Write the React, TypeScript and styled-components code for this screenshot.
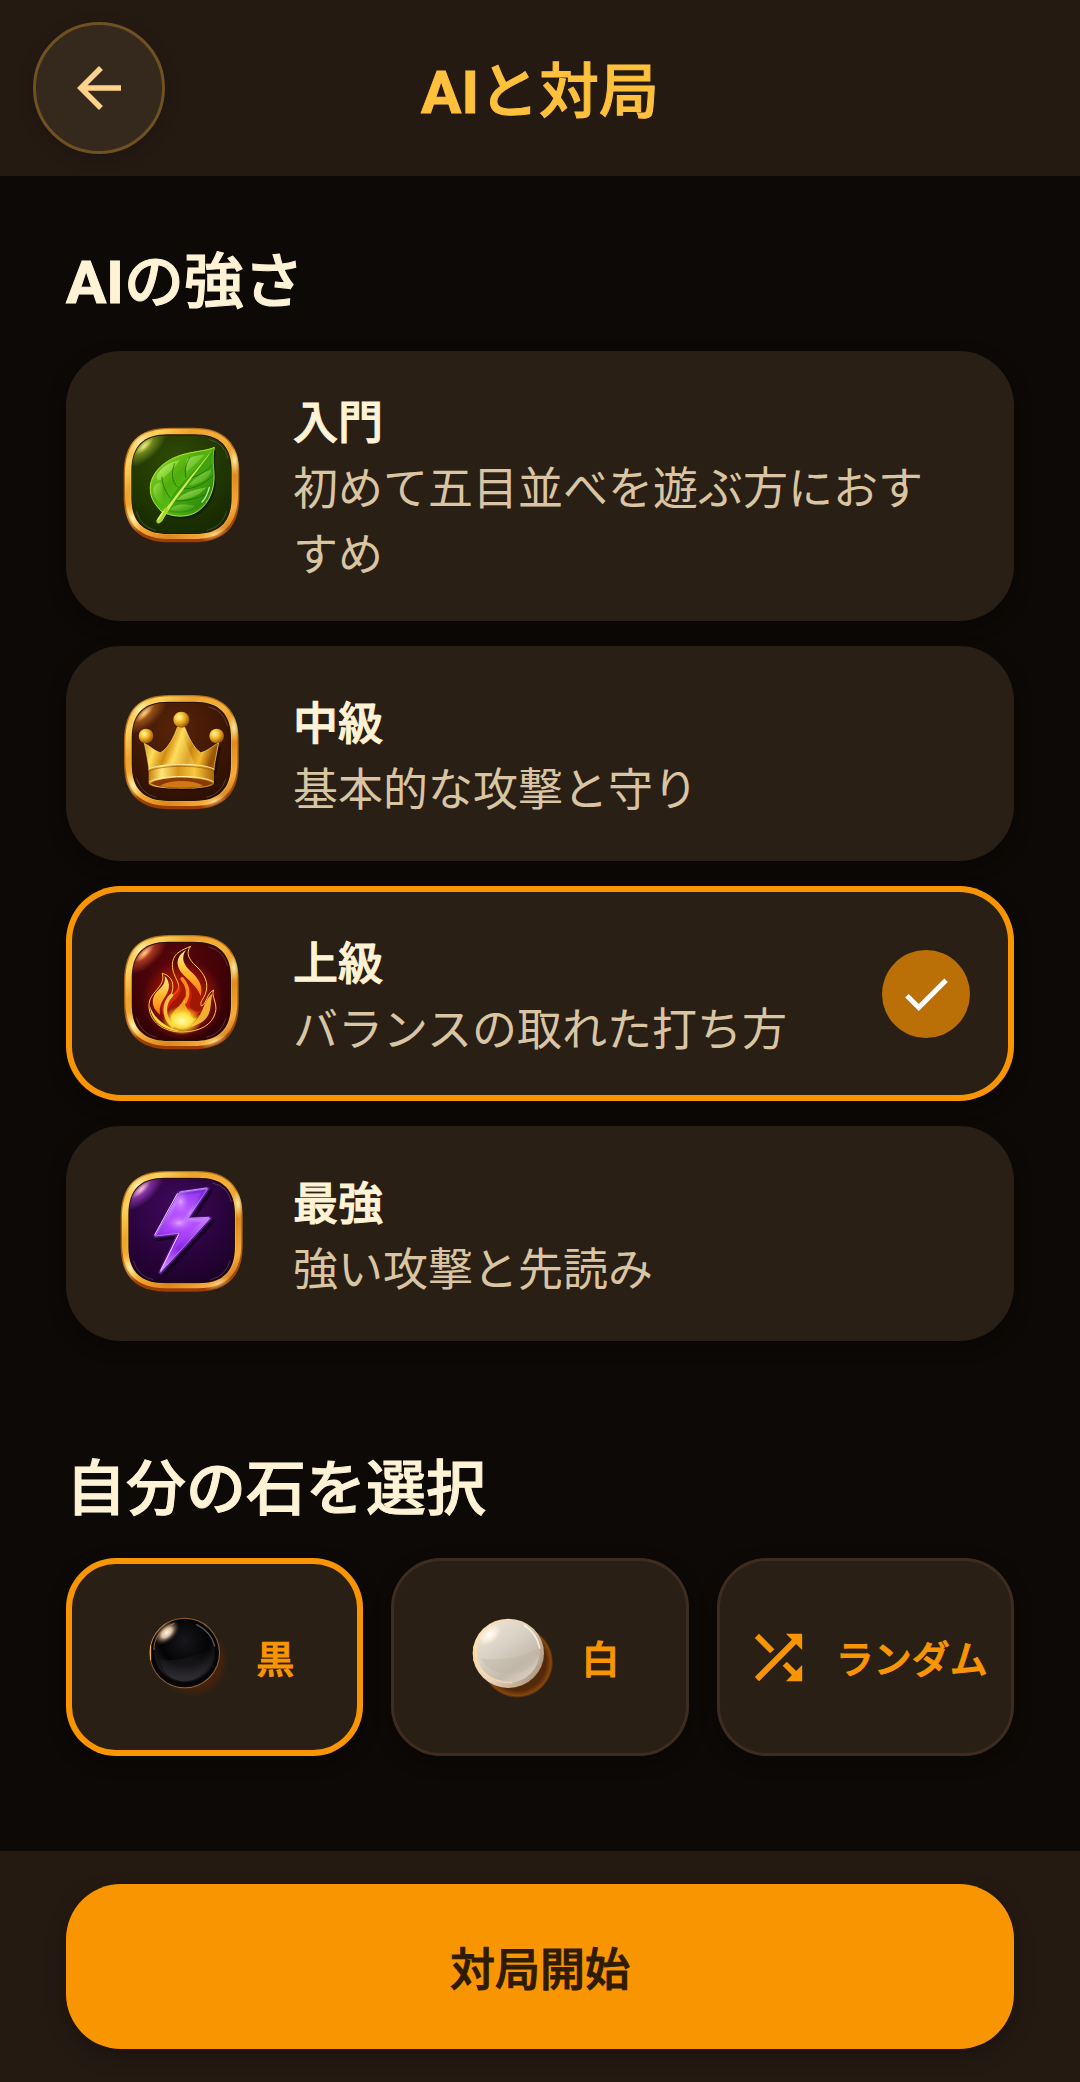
import React, { useState } from "react";
import styled, { createGlobalStyle, css } from "styled-components";

const color = {
  page: "#0d0906",
  bar: "#241a12",
  card: "#291f15",
  line: "#3d2c1f",
  accent: "#f99500",
  gold: "#ffc03c",
  cream: "#fff3d6",
  sand: "#d9c5a3",
};

/* Semi-bold Japanese: the medium cut thickened by a hairline. */
const semiBold = css`
  font-weight: 500;
  -webkit-text-stroke: 1px currentColor;
`;

const GlobalStyle = createGlobalStyle`
  * { box-sizing: border-box; }
  body {
    margin: 0;
    background: ${color.page};
    color: ${color.cream};
    font-family: Roboto, "Noto Sans CJK JP", sans-serif;
  }
  button, input { font: inherit; }
`;

const Page = styled.div`
  display: flex;
  flex-direction: column;
  min-height: 100vh;
`;

const TopBar = styled.header`
  display: grid;
  grid-template-columns: 132px 1fr 132px;
  align-items: center;
  padding: 22px 33px;
  background: ${color.bar};
`;

const BackButton = styled.button`
  display: grid;
  place-items: center;
  width: 132px;
  height: 132px;
  padding: 0;
  border: 3px solid #6f5122;
  border-radius: 50%;
  background: #35281d;
  color: #ffd28c;
  box-shadow: 0 4px 16px rgba(0, 0, 0, 0.2);
  cursor: pointer;
`;

const Title = styled.h1`
  margin: 0;
  padding-top: 10px;
  text-align: center;
  font-size: 60px;
  line-height: 80px;
  ${semiBold}
  color: ${color.gold};
`;

const Latin = styled.span`
  font-weight: 700;
`;

const Content = styled.main`
  flex: 1;
  display: flex;
  flex-direction: column;
  gap: 109px;
  padding: 67px 66px 64px;
`;

const Group = styled.section`
  display: flex;
  flex-direction: column;
  gap: 28px;
`;

const GroupTitle = styled.h2`
  margin: 0;
  font-size: 60px;
  line-height: 80px;
  ${semiBold}
`;

const LevelList = styled.div`
  display: flex;
  flex-direction: column;
  gap: 25px;
`;

const StoneList = styled.div`
  display: grid;
  grid-template-columns: repeat(3, 1fr);
  gap: 28px;
`;

const HiddenRadio = styled.input`
  position: absolute;
  opacity: 0;
  width: 1px;
  height: 1px;
  margin: 0;
`;

const LevelCard = styled.label<{ $on: boolean }>`
  position: relative;
  display: flex;
  align-items: center;
  gap: 41px;
  min-height: 215px;
  padding: 32px 44px;
  border-radius: 55px;
  background: ${color.card};
  box-shadow: ${(p) => (p.$on ? `inset 0 0 0 6px ${color.accent}, ` : "")}0 6px 16px rgba(6, 6, 4, 0.5);
  cursor: pointer;
`;

const LevelText = styled.span`
  flex: 1;
  display: flex;
  flex-direction: column;
  padding: 8px 16px 0 0;
  font-size: 45px;
  line-height: 66px;
`;

const LevelName = styled.span`
  ${semiBold}
`;

const LevelNote = styled.span`
  color: ${color.sand};
`;

const Badge = styled.span`
  display: grid;
  place-items: center;
  width: 88px;
  height: 88px;
  border-radius: 50%;
  background: #ba7006;
  color: #fff;
`;

const StoneCard = styled.label<{ $on: boolean }>`
  position: relative;
  display: flex;
  align-items: center;
  justify-content: center;
  gap: 22px;
  height: 198px;
  border-radius: 50px;
  background: ${color.card};
  box-shadow: inset 0 0 0 ${(p) => (p.$on ? `6px ${color.accent}` : `3px ${color.line}`)},
    0 6px 16px rgba(6, 6, 4, 0.5);
  color: ${color.accent};
  font-size: 38px;
  line-height: 56px;
  white-space: nowrap;
  cursor: pointer;
`;

const StoneName = styled.span`
  padding-top: 6px;
  ${semiBold}
`;

const BottomBar = styled.footer`
  padding: 33px 66px;
  background: ${color.bar};
`;

const StartButton = styled.button`
  display: block;
  width: 100%;
  height: 165px;
  padding: 0;
  border: 0;
  border-radius: 55px;
  background: ${color.accent};
  color: #2f1b00;
  font-size: 45px;
  ${semiBold}
  box-shadow: 0 8px 20px rgba(0, 0, 0, 0.25);
  cursor: pointer;
`;

const Art = styled.svg<{ $size: number }>`
  display: block;
  flex: none;
  width: ${(p) => p.$size}px;
  height: ${(p) => p.$size}px;
`;

function Glyph({ d, size }: { d: string; size: number }) {
  return (
    <Art $size={size} viewBox="0 0 24 24" fill="currentColor" aria-hidden="true">
      <path d={d} />
    </Art>
  );
}

const ARROW = "M20 11H7.83l5.59-5.59L12 4l-8 8 8 8 1.41-1.41L7.83 13H20v-2z";
const CHECK = "M9 16.17L4.83 12l-1.42 1.41L9 19 21 7l-1.41-1.41z";
const SHUFFLE =
  "M10.59 9.17L5.41 4 4 5.41l5.17 5.17 1.42-1.41zM14.5 4l2.04 2.04L4 18.59 5.41 20 17.96 7.46 20 9.5V4h-5.5zm.33 9.41l-1.41 1.41 3.13 3.13L14.5 20H20v-5.5l-2.04 2.04-3.13-3.13z";

type FrameProps = {
  id: string;
  x: number;
  y: number;
  w: number;
  h: number;
  dark: string;
  mid: string;
  glow: string;
};

/* Rounded square whose corners ease into its sides. */
function squircle(x: number, y: number, w: number, h: number, r: number) {
  const k = r * 0.33;
  return (
    `M${x + r} ${y}H${x + w - r}C${x + w - k} ${y} ${x + w} ${y + k} ${x + w} ${y + r}` +
    `V${y + h - r}C${x + w} ${y + h - k} ${x + w - k} ${y + h} ${x + w - r} ${y + h}` +
    `H${x + r}C${x + k} ${y + h} ${x} ${y + h - k} ${x} ${y + h - r}` +
    `V${y + r}C${x} ${y + k} ${x + k} ${y} ${x + r} ${y}Z`
  );
}

/* Gold rim with a tinted glass plate inside, shared by the level icons. */
function Frame({ id, x, y, w, h, dark, mid, glow }: FrameProps) {
  const plate = squircle(x + 25, y + 23, w - 50, h - 50, 108);
  const outer = squircle(x, y, w, h, 138);
  return (
    <>
      <defs>
        <linearGradient id={`${id}-rim`} x1="0" y1="0" x2="1" y2="1">
          <stop offset="0" stopColor="#d98a1c" />
          <stop offset="0.16" stopColor="#ffd35c" />
          <stop offset="0.3" stopColor="#eda42c" />
          <stop offset="0.5" stopColor="#f5b03a" />
          <stop offset="0.68" stopColor="#dc881a" />
          <stop offset="0.84" stopColor="#f7a93a" />
          <stop offset="1" stopColor="#a84a04" />
        </linearGradient>
        <linearGradient id={`${id}-edge`} x1="0" y1="0" x2="0" y2="1">
          <stop offset="0" stopColor="#b87418" />
          <stop offset="0.6" stopColor="#a5600f" />
          <stop offset="1" stopColor="#9c3a00" />
        </linearGradient>
        <radialGradient id={`${id}-plate`} cx="0.45" cy="0.3" r="0.75">
          <stop offset="0" stopColor={mid} />
          <stop offset="1" stopColor={dark} />
        </radialGradient>
        <radialGradient id={`${id}-glow`} cx="0.5" cy="0.5" r="0.5">
          <stop offset="0" stopColor={glow} />
          <stop offset="0.35" stopColor={glow} stopOpacity="0.5" />
          <stop offset="1" stopColor={glow} stopOpacity="0" />
        </radialGradient>
        <radialGradient id={`${id}-spark`} cx="0.5" cy="0.5" r="0.5">
          <stop offset="0" stopColor="#fff6b8" />
          <stop offset="1" stopColor="#ffe27a" stopOpacity="0" />
        </radialGradient>
        <clipPath id={`${id}-clip`}>
          <path d={plate} />
        </clipPath>
        <clipPath id={`${id}-outer`}>
          <path d={outer} />
        </clipPath>
      </defs>
      <path d={outer} fill={`url(#${id}-edge)`} />
      <path d={squircle(x + 4, y + 4, w - 8, h - 14, 134)} fill={`url(#${id}-rim)`} />
      <g clipPath={`url(#${id}-outer)`}>
        <ellipse cx={x + 50} cy={y + 44} rx="48" ry="26" fill={`url(#${id}-spark)`} transform={`rotate(-45 ${x + 50} ${y + 44})`} />
        <ellipse cx={x + w - 14} cy={y + 98} rx="20" ry="46" fill={`url(#${id}-spark)`} opacity="0.9" />
        <ellipse cx={x + 28} cy={y + h - 72} rx="20" ry="44" fill={`url(#${id}-spark)`} transform={`rotate(-25 ${x + 28} ${y + h - 72})`} />
        <ellipse cx={x + w - 74} cy={y + h - 24} rx="44" ry="14" fill={`url(#${id}-spark)`} opacity="0.7" transform={`rotate(-22 ${x + w - 74} ${y + h - 24})`} />
      </g>
      <path d={squircle(x + 21, y + 19, w - 42, h - 43, 111)} fill="#ffd874" opacity="0.5" />
      <path d={squircle(x + 23, y + 20, w - 46, h - 45, 110)} fill="#2a1000" />
      <g clipPath={`url(#${id}-clip)`}>
        <rect x={x} y={y} width={w} height={h} fill={`url(#${id}-plate)`} />
        <ellipse cx={x + 62} cy={y + 56} rx="84" ry="40" fill={`url(#${id}-glow)`} transform={`rotate(-42 ${x + 62} ${y + 56})`} />
        <ellipse cx={x + 62} cy={y + 54} rx="40" ry="12" fill={`url(#${id}-spark)`} opacity="0.7" transform={`rotate(-44 ${x + 62} ${y + 54})`} />
      </g>
      <path
        d={`M${x + 38} ${y + h - 92}q14 46 58 56M${x + w - 38} ${y + h - 92}q-14 46 -58 56M${x + w - 90} ${y + 36}q46 10 56 56`}
        fill="none"
        stroke="#fff"
        strokeWidth="2.5"
        strokeLinecap="round"
        opacity="0.22"
      />
    </>
  );
}

function LeafIcon() {
  const body =
    "M313 112C290 124 238 124 200 140C150 160 117 200 121 242C123 270 140 288 153 303C180 320 222 324 252 310C290 292 310 250 312 208C313 170 305 150 313 112Z";
  return (
    <Art $size={142} viewBox="0 15 426 426" aria-hidden="true">
      <Frame id="leaf" x={41} y={53} w={347} h={344} dark="#122400" mid="#304c04" glow="#b9cf3a" />
      <defs>
        <linearGradient id="leaf-fill" x1="0" y1="0" x2="1" y2="1">
          <stop offset="0" stopColor="#a4ea2c" />
          <stop offset="0.42" stopColor="#4fae0c" />
          <stop offset="0.6" stopColor="#57bd18" />
          <stop offset="1" stopColor="#238004" />
        </linearGradient>
        <linearGradient id="leaf-shine" x1="0" y1="0" x2="1" y2="1">
          <stop offset="0" stopColor="#e8ffb0" stopOpacity="0.85" />
          <stop offset="1" stopColor="#8ee82a" stopOpacity="0.1" />
        </linearGradient>
      </defs>
      <path d={body} fill="#0a1500" opacity="0.6" transform="translate(6 8)" />
      <path d={body} fill="url(#leaf-fill)" stroke="#b8e63a" strokeWidth="3" />
      <path d="M176 288C184 240 240 200 313 112C309 166 318 212 300 250C270 312 214 316 160 303Z" fill="#1c7602" opacity="0.35" />
      <g fill="url(#leaf-shine)">
        <path d="M140 200C150 172 180 156 210 150C196 170 182 184 162 202C152 212 142 216 140 200Z" />
        <path d="M232 146C250 138 270 134 284 134C268 150 250 168 230 186C226 172 226 158 232 146Z" opacity="0.7" />
        <path d="M130 236C136 218 150 214 154 222C158 250 160 268 160 286C142 276 128 258 130 236Z" opacity="0.5" />
        <path d="M200 270C220 248 250 240 290 232C270 256 240 270 200 270Z" opacity="0.9" />
        <path d="M236 226C256 200 280 186 304 180C300 206 272 222 236 226Z" opacity="0.7" />
        <path d="M180 300C196 280 222 282 256 288C232 306 208 306 180 300Z" opacity="0.5" />
      </g>
      <g fill="none" stroke="#1d6a00" strokeWidth="3" opacity="0.75">
        <path d="M228 204C222 184 228 158 240 142" />
        <path d="M204 232C184 216 184 186 194 160" />
        <path d="M180 264C166 244 156 220 156 200" />
        <path d="M240 204C262 200 290 184 306 164" />
        <path d="M214 236C246 240 284 222 308 198" />
        <path d="M186 272C220 276 260 268 296 248" />
      </g>
      <path d="M143 334C160 304 214 232 312 114C240 214 190 272 156 334Q146 342 143 334Z" fill="#d0ec52" />
      <path d="M146 333L168 301" stroke="#a8d82c" strokeWidth="14" strokeLinecap="round" />
      <path d="M144 328L160 304" stroke="#e2f880" strokeWidth="4" strokeLinecap="round" />
      <path d="M298 232Q290 262 276 276" fill="none" stroke="#e8ffd8" strokeWidth="4" strokeLinecap="round" opacity="0.8" />
    </Art>
  );
}

function CrownIcon() {
  const body =
    "M103 190C122 200 138 216 152 218C176 204 192 170 202 142H224C236 170 250 204 272 218C290 214 306 200 326 188C320 220 314 246 311 274H118C114 246 110 220 103 190Z";
  return (
    <Art $size={142} viewBox="0 9 426 426" aria-hidden="true">
      <Frame id="crown" x={42} y={45} w={344} h={343} dark="#260c02" mid="#5a2408" glow="#e0822c" />
      <defs>
        <linearGradient id="crown-fill" x1="0" y1="0" x2="1" y2="0.2">
          <stop offset="0" stopColor="#b87008" />
          <stop offset="0.22" stopColor="#ffdf5a" />
          <stop offset="0.38" stopColor="#d18b10" />
          <stop offset="0.52" stopColor="#ffdc56" />
          <stop offset="0.7" stopColor="#c98510" />
          <stop offset="0.86" stopColor="#f4bb30" />
          <stop offset="1" stopColor="#9a5604" />
        </linearGradient>
        <linearGradient id="crown-band" x1="0" y1="0" x2="1" y2="0">
          <stop offset="0" stopColor="#c88410" />
          <stop offset="0.2" stopColor="#ffe676" />
          <stop offset="0.45" stopColor="#d8951a" />
          <stop offset="0.7" stopColor="#fbc840" />
          <stop offset="1" stopColor="#a86408" />
        </linearGradient>
        <radialGradient id="crown-ball" cx="0.36" cy="0.34" r="0.7">
          <stop offset="0" stopColor="#fff6b4" />
          <stop offset="0.3" stopColor="#ffd24a" />
          <stop offset="0.7" stopColor="#d18c10" />
          <stop offset="1" stopColor="#8c4c04" />
        </radialGradient>
      </defs>
      <path d={body} fill="#140500" opacity="0.6" transform="translate(8 10)" />
      <ellipse cx="218" cy="306" rx="98" ry="26" fill="#140500" opacity="0.6" />
      <path d={body} fill="url(#crown-fill)" stroke="#ffe07a" strokeWidth="2" />
      <path d="M214 146C204 190 190 220 168 256H256C240 220 226 190 214 146Z" fill="#ffdd64" opacity="0.35" />
      <path d="M116 268C150 246 280 246 312 268V312C300 322 270 326 214 326C160 326 130 322 116 312Z" fill="url(#crown-band)" />
      <path d="M122 310C150 288 278 288 308 310C290 322 250 325 214 325C176 325 140 322 122 310Z" fill="#8c3a04" />
      <path d="M150 318C176 298 252 298 280 318C256 325 174 325 150 318Z" fill="#e0861a" opacity="0.8" />
      <g fill="none" stroke="#fff0a0" strokeWidth="3">
        <path d="M115 268C150 248 280 248 313 268" />
        <path d="M118 306C150 284 280 284 311 306" />
      </g>
      <path d="M116 274C150 254 280 254 312 274" fill="none" stroke="#9a5a06" strokeWidth="2" />
      <circle cx="108" cy="168" r="22" fill="url(#crown-ball)" />
      <circle cx="214" cy="119" r="24" fill="url(#crown-ball)" />
      <circle cx="320" cy="168" r="22" fill="url(#crown-ball)" />
    </Art>
  );
}

function FlameIcon() {
  return (
    <Art $size={142} viewBox="0 9 426 426" aria-hidden="true">
      <Frame id="flame" x={42} y={45} w={344} h={343} dark="#2a0004" mid="#5c060a" glow="#ff6a3c" />
      <defs>
        <linearGradient id="flame-outer" x1="0" y1="0" x2="0.2" y2="1">
          <stop offset="0" stopColor="#ffa62c" />
          <stop offset="0.35" stopColor="#ff5a14" />
          <stop offset="0.7" stopColor="#ff7412" />
          <stop offset="1" stopColor="#ffb424" />
        </linearGradient>
        <linearGradient id="flame-lick" x1="0" y1="0" x2="0" y2="1">
          <stop offset="0" stopColor="#fff08a" />
          <stop offset="0.5" stopColor="#ffb82c" />
          <stop offset="1" stopColor="#ff7a14" />
        </linearGradient>
        <radialGradient id="flame-core" cx="0.5" cy="0.5" r="0.5">
          <stop offset="0" stopColor="#fffbb0" />
          <stop offset="0.5" stopColor="#ffe540" stopOpacity="0.95" />
          <stop offset="1" stopColor="#ffb01c" stopOpacity="0" />
        </radialGradient>
        <radialGradient id="flame-halo">
          <stop offset="0.5" stopColor="#ff2a00" stopOpacity="0.5" />
          <stop offset="1" stopColor="#ff2a00" stopOpacity="0" />
        </radialGradient>
        <clipPath id="flame-clip">
          <path d="M242 79C226 98 236 118 258 138C284 162 298 190 286 222C280 238 268 246 274 258C292 250 288 222 311 210C302 228 324 250 316 278C306 314 272 335 216 336C160 336 118 306 117 258C116 214 168 204 157 160C188 168 196 196 182 228C200 222 210 208 204 188C194 166 184 150 188 124C194 98 216 90 242 79Z" />
        </clipPath>
      </defs>
      <ellipse cx="218" cy="240" rx="122" ry="122" fill="url(#flame-halo)" />
      <path d="M242 79C226 98 236 118 258 138C284 162 298 190 286 222C280 238 268 246 274 258C292 250 288 222 311 210C302 228 324 250 316 278C306 314 272 335 216 336C160 336 118 306 117 258C116 214 168 204 157 160C188 168 196 196 182 228C200 222 210 208 204 188C194 166 184 150 188 124C194 98 216 90 242 79Z" fill="url(#flame-outer)" stroke="#ffc83c" strokeWidth="3" />
      <g clipPath="url(#flame-clip)">
        <path d="M164 168C180 184 180 204 170 222C158 242 146 258 150 284C124 264 122 236 140 216C156 200 168 190 164 168Z" fill="url(#flame-lick)" />
        <path d="M228 90C212 112 220 134 242 154C266 176 280 198 272 228C262 200 240 184 220 164C200 144 192 112 228 90Z" fill="url(#flame-lick)" />
        <path d="M206 190C222 212 204 232 188 246C172 262 166 280 176 300C152 284 152 262 164 244C178 224 206 214 206 190Z" fill="#ee3208" opacity="0.6" />
        <path d="M226 182C246 206 250 226 240 248C236 268 254 282 276 270C262 292 236 286 228 264C224 240 238 214 226 182Z" fill="#e82a06" opacity="0.6" />
        <path d="M308 220C300 244 306 268 292 290C280 308 258 316 242 320C262 300 274 280 282 258C290 240 296 230 308 220Z" fill="#ffc034" opacity="0.9" />
        <path d="M120 258C134 300 170 322 214 334C164 334 122 306 120 258Z" fill="#ffd83c" />
        <path d="M184 226C162 248 156 288 188 318" fill="none" stroke="#ffd84c" strokeWidth="11" strokeLinecap="round" opacity="0.85" />
        <path d="M216 176C236 200 238 222 226 246" fill="none" stroke="#ff9c24" strokeWidth="10" strokeLinecap="round" opacity="0.9" />
        <path d="M224 230C218 258 186 266 182 294C188 318 240 326 262 294C250 298 238 292 242 278C230 268 222 254 224 230Z" fill="#ffd030" opacity="0.75" />
        <ellipse cx="216" cy="302" rx="60" ry="44" fill="url(#flame-core)" />
      </g>
    </Art>
  );
}

function BoltIcon() {
  const bolt = "M208 113L293 101L233 192L300 190L151 352L207 235L136 243Z";
  return (
    <Art $size={142} viewBox="0 24 426 426" aria-hidden="true">
      <Frame id="bolt" x={32} y={48} w={366} h={362} dark="#170022" mid="#40085c" glow="#d060ff" />
      <defs>
        <linearGradient id="bolt-fill" x1="0.6" y1="0" x2="0.3" y2="1">
          <stop offset="0" stopColor="#7a2ae0" />
          <stop offset="0.25" stopColor="#c47cff" />
          <stop offset="0.45" stopColor="#b050fa" />
          <stop offset="0.7" stopColor="#8a28e4" />
          <stop offset="1" stopColor="#d488ff" />
        </linearGradient>
        <radialGradient id="bolt-hot">
          <stop offset="0" stopColor="#f0c8ff" stopOpacity="0.7" />
          <stop offset="1" stopColor="#c060ff" stopOpacity="0" />
        </radialGradient>
        <clipPath id="bolt-clip">
          <path d={bolt} />
        </clipPath>
      </defs>
      <path d={bolt} fill="#0a0010" stroke="#0a0010" strokeWidth="14" strokeLinejoin="round" opacity="0.6" transform="translate(8 8)" />
      <path d={bolt} fill="#6a1cb4" stroke="#5a1496" strokeWidth="12" strokeLinejoin="round" />
      <path d={bolt} fill="url(#bolt-fill)" stroke="#d8a0ff" strokeWidth="2" strokeLinejoin="round" />
      <g clipPath="url(#bolt-clip)">
        <path d="M210 124L276 112L214 202L272 202L184 292L222 222L158 232Z" fill="#b040ff" opacity="0.55" />
        <ellipse cx="208" cy="204" rx="44" ry="26" fill="url(#bolt-hot)" />
        <ellipse cx="212" cy="140" rx="26" ry="34" fill="url(#bolt-hot)" />
      </g>
      <path d="M202 116L134 240M205 240L152 346" stroke="#f0d0ff" strokeWidth="3" strokeLinecap="round" />
      <path d="M212 110L290 99M296 187L238 190" stroke="#c890f4" strokeWidth="3" strokeLinecap="round" />
    </Art>
  );
}

function BlackStone() {
  return (
    <Art $size={99} viewBox="255 204 297 297" aria-hidden="true">
      <defs>
        <radialGradient id="bs-shadow">
          <stop offset="0.7" stopColor="#4a220a" />
          <stop offset="1" stopColor="#4a220a" stopOpacity="0" />
        </radialGradient>
        <linearGradient id="bs-rim" x1="0" y1="0.2" x2="1" y2="0.7">
          <stop offset="0" stopColor="#f0a860" />
          <stop offset="0.2" stopColor="#8a5a34" />
          <stop offset="1" stopColor="#8a6850" />
        </linearGradient>
        <radialGradient id="bs-face" cx="0.5" cy="0.32" r="0.72">
          <stop offset="0" stopColor="#17161a" />
          <stop offset="0.55" stopColor="#040406" />
          <stop offset="0.85" stopColor="#1c1a1e" />
          <stop offset="1" stopColor="#040303" />
        </radialGradient>
        <radialGradient id="bs-shine">
          <stop offset="0" stopColor="#fffaf0" />
          <stop offset="0.4" stopColor="#f0d0ac" stopOpacity="0.9" />
          <stop offset="1" stopColor="#40302a" stopOpacity="0" />
        </radialGradient>
        <linearGradient id="bs-low" x1="0" y1="0" x2="0" y2="1">
          <stop offset="0" stopColor="#2c2a30" stopOpacity="0" />
          <stop offset="1" stopColor="#3a383e" stopOpacity="0.7" />
        </linearGradient>
      </defs>
      <circle cx="428" cy="364" r="108" fill="url(#bs-shadow)" />
      <circle cx="404" cy="339" r="106" fill="url(#bs-rim)" />
      <circle cx="404" cy="339" r="103" fill="#080506" />
      <circle cx="404" cy="337" r="91" fill="url(#bs-face)" />
      <path d="M330 358C370 366 440 354 490 322C494 380 450 424 404 424C362 424 336 396 330 358Z" fill="url(#bs-low)" />
      <ellipse cx="350" cy="278" rx="46" ry="27" fill="url(#bs-shine)" transform="rotate(-42 350 278)" />
      <path d="M312 330C310 294 336 262 374 250" fill="none" stroke="#c88a54" strokeWidth="3" opacity="0.7" />
      <path d="M302 318V360" stroke="#ffb868" strokeWidth="3" strokeLinecap="round" />
      <path d="M440 254Q484 276 494 318" fill="none" stroke="#908c94" strokeWidth="4" strokeLinecap="round" opacity="0.6" />
    </Art>
  );
}

function WhiteStone() {
  return (
    <Art $size={99} viewBox="243 204 297 297" aria-hidden="true">
      <defs>
        <radialGradient id="ws-shadow">
          <stop offset="0.8" stopColor="#54290a" />
          <stop offset="0.94" stopColor="#88480c" />
          <stop offset="1" stopColor="#7a400c" stopOpacity="0" />
        </radialGradient>
        <linearGradient id="ws-rim" x1="0" y1="0.2" x2="1" y2="0.8">
          <stop offset="0" stopColor="#ffe2b4" />
          <stop offset="0.5" stopColor="#e6d2bc" />
          <stop offset="1" stopColor="#a8927c" />
        </linearGradient>
        <linearGradient id="ws-face" x1="0.1" y1="0" x2="0.8" y2="1">
          <stop offset="0" stopColor="#f0e4d6" />
          <stop offset="0.4" stopColor="#d9d2c6" />
          <stop offset="0.75" stopColor="#c4baac" />
          <stop offset="1" stopColor="#ded2c4" />
        </linearGradient>
        <radialGradient id="ws-shine">
          <stop offset="0" stopColor="#fffefa" />
          <stop offset="0.5" stopColor="#fff4e2" stopOpacity="0.8" />
          <stop offset="1" stopColor="#fff0dc" stopOpacity="0" />
        </radialGradient>
      </defs>
      <circle cx="415" cy="366" r="108" fill="url(#ws-shadow)" />
      <ellipse cx="388" cy="340" rx="107" ry="104" fill="url(#ws-rim)" />
      <ellipse cx="388" cy="336" rx="94" ry="92" fill="url(#ws-face)" />
      <path d="M306 354C350 366 440 350 480 320C482 370 446 400 390 400C344 400 316 382 306 354Z" fill="#b8ae9f" opacity="0.3" />
      <ellipse cx="332" cy="284" rx="42" ry="25" fill="url(#ws-shine)" transform="rotate(-42 332 284)" />
      <path d="M436 256Q474 280 482 324" fill="none" stroke="#fffaf2" strokeWidth="5" strokeLinecap="round" opacity="0.8" />
      <path d="M300 384Q340 428 398 428" fill="none" stroke="#ffdcb0" strokeWidth="5" strokeLinecap="round" opacity="0.7" />
      <path d="M285 320V362" stroke="#ffd08c" strokeWidth="4" strokeLinecap="round" />
    </Art>
  );
}

const levels = [
  { id: "beginner", name: "入門", note: "初めて五目並べを遊ぶ方におすすめ", icon: <LeafIcon /> },
  { id: "middle", name: "中級", note: "基本的な攻撃と守り", icon: <CrownIcon /> },
  { id: "advanced", name: "上級", note: "バランスの取れた打ち方", icon: <FlameIcon /> },
  { id: "strongest", name: "最強", note: "強い攻撃と先読み", icon: <BoltIcon /> },
];

const stones = [
  { id: "black", name: "黒", icon: <BlackStone /> },
  { id: "white", name: "白", icon: <WhiteStone /> },
  { id: "random", name: "ランダム", icon: <Glyph d={SHUFFLE} size={71} /> },
];

export default function App() {
  const [level, setLevel] = useState("advanced");
  const [stone, setStone] = useState("black");

  return (
    <Page lang="ja">
      <GlobalStyle />
      <TopBar>
        <BackButton type="button" aria-label="戻る">
          <Glyph d={ARROW} size={66} />
        </BackButton>
        <Title>
          <Latin>AI</Latin>と対局
        </Title>
      </TopBar>
      <Content>
        <Group>
          <GroupTitle id="level-title">
            <Latin>AI</Latin>の強さ
          </GroupTitle>
          <LevelList role="radiogroup" aria-labelledby="level-title">
            {levels.map((item) => (
              <LevelCard key={item.id} htmlFor={item.id} $on={level === item.id}>
                <HiddenRadio
                  type="radio"
                  id={item.id}
                  name="level"
                  checked={level === item.id}
                  onChange={() => setLevel(item.id)}
                />
                {item.icon}
                <LevelText>
                  <LevelName>{item.name}</LevelName>
                  <LevelNote>{item.note}</LevelNote>
                </LevelText>
                {level === item.id && (
                  <Badge>
                    <Glyph d={CHECK} size={58} />
                  </Badge>
                )}
              </LevelCard>
            ))}
          </LevelList>
        </Group>
        <Group>
          <GroupTitle id="stone-title">自分の石を選択</GroupTitle>
          <StoneList role="radiogroup" aria-labelledby="stone-title">
            {stones.map((item) => (
              <StoneCard key={item.id} htmlFor={item.id} $on={stone === item.id}>
                <HiddenRadio
                  type="radio"
                  id={item.id}
                  name="stone"
                  checked={stone === item.id}
                  onChange={() => setStone(item.id)}
                />
                {item.icon}
                <StoneName>{item.name}</StoneName>
              </StoneCard>
            ))}
          </StoneList>
        </Group>
      </Content>
      <BottomBar>
        <StartButton type="button">対局開始</StartButton>
      </BottomBar>
    </Page>
  );
}
